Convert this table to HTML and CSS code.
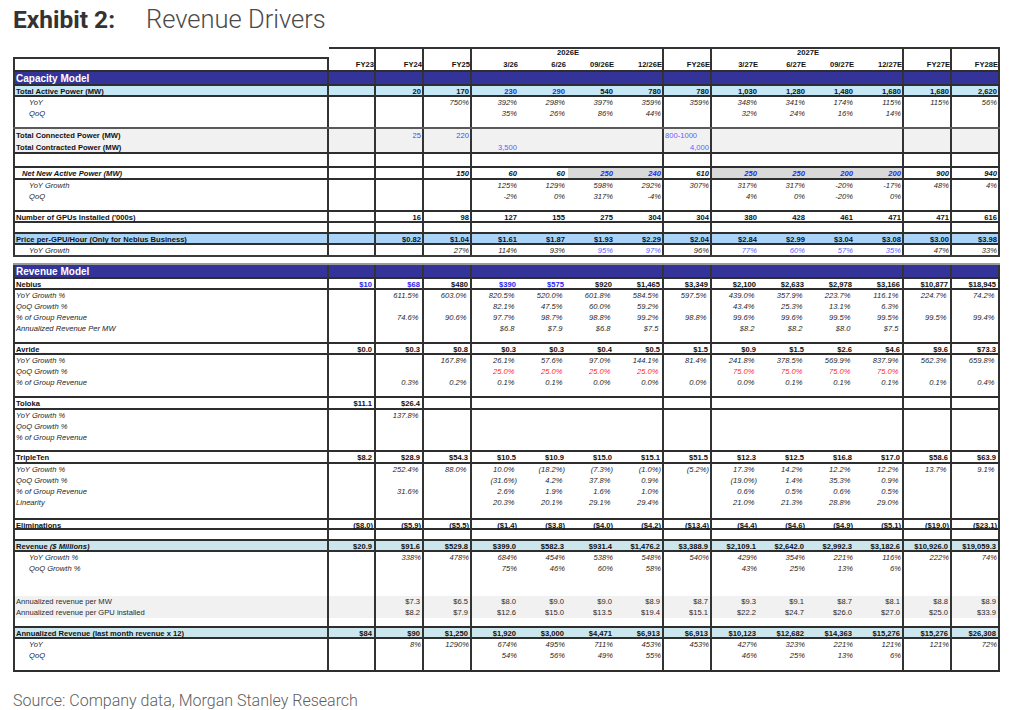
FILE: index.html
```html
<!DOCTYPE html>
<html lang="en">
<head>
<meta charset="utf-8">
<title>Exhibit 2: Revenue Drivers</title>
<link rel="stylesheet" href="styles.css">
</head>
<body>
<div class="page">
  <h1 class="title"><span class="ex">Exhibit 2:</span><span class="nm">Revenue Drivers</span></h1>

  <div class="t">
    <div class="yr"><span class="nb"></span><span></span><span></span><span></span><span class="y4">2026E</span><span></span><span class="y4">2027E</span><span></span><span></span></div>
    <div class="r hd h15 b"><span class="tl"></span><span>FY23</span><span>FY24</span><span>FY25</span><span>3/26</span><span>6/26</span><span>09/26E</span><span>12/26E</span><span>FY26E</span><span>3/27E</span><span>6/27E</span><span>09/27E</span><span>12/27E</span><span>FY27E</span><span>FY28E</span></div>

    <div class="r sec h14 b"><span>Capacity Model</span><span></span><span></span><span></span><span></span><span></span><span></span><span></span><span></span><span></span><span></span><span></span><span></span><span></span><span></span></div>
    <div class="r bd tap b"><span>Total Active Power (MW)</span><span></span><span>20</span><span>170</span><span class="bl">230</span><span class="bl">290</span><span>540</span><span>780</span><span>780</span><span>1,030</span><span>1,280</span><span>1,480</span><span>1,680</span><span>1,680</span><span>2,620</span></div>
    <div class="r it"><span class="in">YoY</span><span></span><span></span><span>750%</span><span>392%</span><span>298%</span><span>397%</span><span>359%</span><span>359%</span><span>348%</span><span>341%</span><span>174%</span><span>115%</span><span>115%</span><span>56%</span></div>
    <div class="r it"><span class="in">QoQ</span><span></span><span></span><span></span><span>35%</span><span>26%</span><span>86%</span><span>44%</span><span></span><span>32%</span><span>24%</span><span>16%</span><span>14%</span><span></span><span></span></div>
    <div class="r h10 bm"><span></span><span></span><span></span><span></span><span></span><span></span><span></span><span></span><span></span><span></span><span></span><span></span><span></span><span></span><span></span></div>
    <div class="r bd gy h13"><span>Total Connected Power (MW)</span><span></span><span class="nw bl2">25</span><span class="nw bl2">220</span><span></span><span></span><span></span><span></span><span class="nw lb la">800-1000</span><span></span><span></span><span></span><span></span><span></span><span></span></div>
    <div class="r bd gy h12 b"><span>Total Contracted Power (MW)</span><span></span><span></span><span></span><span class="nw lb">3,500</span><span></span><span></span><span></span><span class="nw lb">4,000</span><span></span><span></span><span></span><span></span><span></span><span></span></div>
    <div class="r h14 b"><span></span><span></span><span></span><span></span><span></span><span></span><span></span><span></span><span></span><span></span><span></span><span></span><span></span><span></span><span></span></div>
    <div class="r bd it h12 b"><span class="in2">Net New Active Power (MW)</span><span></span><span></span><span>150</span><span>60</span><span>60</span><span class="g bl">250</span><span class="g bl">240</span><span>610</span><span class="g bl">250</span><span class="g bl">250</span><span class="g bl">200</span><span class="g bl">200</span><span>900</span><span>940</span></div>
    <div class="r it"><span class="in">YoY Growth</span><span></span><span></span><span></span><span>125%</span><span>129%</span><span>598%</span><span>292%</span><span>307%</span><span>317%</span><span>317%</span><span>-20%</span><span>-17%</span><span>48%</span><span>4%</span></div>
    <div class="r it"><span class="in">QoQ</span><span></span><span></span><span></span><span>-2%</span><span>0%</span><span>317%</span><span>-4%</span><span></span><span>4%</span><span>0%</span><span>-20%</span><span>0%</span><span></span><span></span></div>
    <div class="r h10 b"><span></span><span></span><span></span><span></span><span></span><span></span><span></span><span></span><span></span><span></span><span></span><span></span><span></span><span></span><span></span></div>
    <div class="r bd b"><span>Number of GPUs Installed ('000s)</span><span></span><span>16</span><span>98</span><span>127</span><span>155</span><span>275</span><span>304</span><span>304</span><span>380</span><span>428</span><span>461</span><span>471</span><span>471</span><span>616</span></div>
    <div class="r b"><span></span><span></span><span></span><span></span><span></span><span></span><span></span><span></span><span></span><span></span><span></span><span></span><span></span><span></span><span></span></div>
    <div class="r bd pr b"><span>Price per-GPU/Hour (Only for Nebius Business)</span><span></span><span>$0.82</span><span>$1.04</span><span>$1.61</span><span>$1.87</span><span>$1.93</span><span>$2.29</span><span>$2.04</span><span>$2.84</span><span>$2.99</span><span>$3.04</span><span>$3.08</span><span>$3.00</span><span>$3.98</span></div>
    <div class="r it h12 b"><span class="in">YoY Growth</span><span></span><span></span><span>27%</span><span>114%</span><span>93%</span><span class="lb">95%</span><span class="lb">97%</span><span>96%</span><span class="lb">77%</span><span class="lb">60%</span><span class="lb">57%</span><span class="lb">35%</span><span>47%</span><span>33%</span></div>

    <div class="gap"></div>

    <div class="r sec h14 b"><span>Revenue Model</span><span></span><span></span><span></span><span></span><span></span><span></span><span></span><span></span><span></span><span></span><span></span><span></span><span></span><span></span></div>
    <div class="r bd rv b"><span>Nebius</span><span class="bl">$10</span><span class="bl">$68</span><span>$480</span><span class="bl">$390</span><span class="bl">$575</span><span>$920</span><span>$1,465</span><span>$3,349</span><span>$2,100</span><span>$2,633</span><span>$2,978</span><span>$3,166</span><span>$10,877</span><span>$18,945</span></div>
    <div class="r it sg"><span>YoY Growth %</span><span></span><span>611.5%</span><span>603.0%</span><span>820.5%</span><span>520.0%</span><span>601.8%</span><span>584.5%</span><span>597.5%</span><span>439.0%</span><span>357.9%</span><span>223.7%</span><span>116.1%</span><span>224.7%</span><span>74.2%</span></div>
    <div class="r it sg"><span>QoQ Growth %</span><span></span><span></span><span></span><span>82.1%</span><span>47.5%</span><span>60.0%</span><span>59.2%</span><span></span><span>43.4%</span><span>25.3%</span><span>13.1%</span><span>6.3%</span><span></span><span></span></div>
    <div class="r it sg"><span>% of Group Revenue</span><span></span><span>74.6%</span><span>90.6%</span><span>97.7%</span><span>98.7%</span><span>98.8%</span><span>99.2%</span><span>98.8%</span><span>99.6%</span><span>99.6%</span><span>99.5%</span><span>99.5%</span><span>99.5%</span><span>99.4%</span></div>
    <div class="r it sg"><span>Annualized Revenue Per MW</span><span></span><span></span><span></span><span>$6.8</span><span>$7.9</span><span>$6.8</span><span>$7.5</span><span></span><span>$8.2</span><span>$8.2</span><span>$8.0</span><span>$7.5</span><span></span><span></span></div>
    <div class="r h10 b"><span></span><span></span><span></span><span></span><span></span><span></span><span></span><span></span><span></span><span></span><span></span><span></span><span></span><span></span><span></span></div>

    <div class="r bd rv b"><span>Avride</span><span>$0.0</span><span>$0.3</span><span>$0.8</span><span>$0.3</span><span>$0.3</span><span>$0.4</span><span>$0.5</span><span>$1.5</span><span>$0.9</span><span>$1.5</span><span>$2.6</span><span>$4.6</span><span>$9.6</span><span>$73.3</span></div>
    <div class="r it sg"><span>YoY Growth %</span><span></span><span></span><span>167.8%</span><span>26.1%</span><span>57.6%</span><span>97.0%</span><span>144.1%</span><span>81.4%</span><span>241.8%</span><span>378.5%</span><span>569.9%</span><span>837.9%</span><span>562.3%</span><span>659.8%</span></div>
    <div class="r it sg"><span>QoQ Growth %</span><span></span><span></span><span></span><span class="rd">25.0%</span><span class="rd">25.0%</span><span class="rd">25.0%</span><span class="rd">25.0%</span><span></span><span class="rd">75.0%</span><span class="rd">75.0%</span><span class="rd">75.0%</span><span class="rd">75.0%</span><span></span><span></span></div>
    <div class="r it sg"><span>% of Group Revenue</span><span></span><span>0.3%</span><span>0.2%</span><span>0.1%</span><span>0.1%</span><span>0.0%</span><span>0.0%</span><span>0.0%</span><span>0.0%</span><span>0.1%</span><span>0.1%</span><span>0.1%</span><span>0.1%</span><span>0.4%</span></div>
    <div class="r h10 b"><span></span><span></span><span></span><span></span><span></span><span></span><span></span><span></span><span></span><span></span><span></span><span></span><span></span><span></span><span></span></div>

    <div class="r bd rv h12 b"><span>Toloka</span><span>$11.1</span><span>$26.4</span><span></span><span></span><span></span><span></span><span></span><span></span><span></span><span></span><span></span><span></span><span></span><span></span></div>
    <div class="r it sg"><span>YoY Growth %</span><span></span><span>137.8%</span><span></span><span></span><span></span><span></span><span></span><span></span><span></span><span></span><span></span><span></span><span></span><span></span></div>
    <div class="r it sg"><span>QoQ Growth %</span><span></span><span></span><span></span><span></span><span></span><span></span><span></span><span></span><span></span><span></span><span></span><span></span><span></span><span></span></div>
    <div class="r it sg"><span>% of Group Revenue</span><span></span><span></span><span></span><span></span><span></span><span></span><span></span><span></span><span></span><span></span><span></span><span></span><span></span><span></span></div>
    <div class="r h9 b"><span></span><span></span><span></span><span></span><span></span><span></span><span></span><span></span><span></span><span></span><span></span><span></span><span></span><span></span><span></span></div>

    <div class="r bd rv h12 b"><span>TripleTen</span><span>$8.2</span><span>$28.9</span><span>$54.3</span><span>$10.5</span><span>$10.9</span><span>$15.0</span><span>$15.1</span><span>$51.5</span><span>$12.3</span><span>$12.5</span><span>$16.8</span><span>$17.0</span><span>$58.6</span><span>$63.9</span></div>
    <div class="r it sg"><span>YoY Growth %</span><span></span><span>252.4%</span><span>88.0%</span><span>10.0%</span><span class="n">(18.2%)</span><span class="n">(7.3%)</span><span class="n">(1.0%)</span><span class="n">(5.2%)</span><span>17.3%</span><span>14.2%</span><span>12.2%</span><span>12.2%</span><span>13.7%</span><span>9.1%</span></div>
    <div class="r it sg"><span>QoQ Growth %</span><span></span><span></span><span></span><span class="n">(31.6%)</span><span>4.2%</span><span>37.8%</span><span>0.9%</span><span></span><span class="n">(19.0%)</span><span>1.4%</span><span>35.3%</span><span>0.9%</span><span></span><span></span></div>
    <div class="r it sg"><span>% of Group Revenue</span><span></span><span>31.6%</span><span></span><span>2.6%</span><span>1.9%</span><span>1.6%</span><span>1.0%</span><span></span><span>0.6%</span><span>0.5%</span><span>0.6%</span><span>0.5%</span><span></span><span></span></div>
    <div class="r it sg"><span>Linearity</span><span></span><span></span><span></span><span>20.3%</span><span>20.1%</span><span>29.1%</span><span>29.4%</span><span></span><span>21.0%</span><span>21.3%</span><span>28.8%</span><span>29.0%</span><span></span><span></span></div>
    <div class="r h12 b"><span></span><span></span><span></span><span></span><span></span><span></span><span></span><span></span><span></span><span></span><span></span><span></span><span></span><span></span><span></span></div>

    <div class="r bd rv h10 b"><span>Eliminations</span><span class="n">($8.0)</span><span class="n">($5.9)</span><span class="n">($5.5)</span><span class="n">($1.4)</span><span class="n">($3.8)</span><span class="n">($4.0)</span><span class="n">($4.2)</span><span class="n">($13.4)</span><span class="n">($4.4)</span><span class="n">($4.6)</span><span class="n">($4.9)</span><span class="n">($5.1)</span><span class="n">($19.0)</span><span class="n">($23.1)</span></div>
    <div class="r b"><span></span><span></span><span></span><span></span><span></span><span></span><span></span><span></span><span></span><span></span><span></span><span></span><span></span><span></span><span></span></div>

    <div class="r bd rv tot b"><span>Revenue&nbsp;<em>($ Millions)</em></span><span>$20.9</span><span>$91.6</span><span>$529.8</span><span>$399.0</span><span>$582.3</span><span>$931.4</span><span>$1,476.2</span><span>$3,388.9</span><span>$2,109.1</span><span>$2,642.0</span><span>$2,992.3</span><span>$3,182.6</span><span>$10,926.0</span><span>$19,059.3</span></div>
    <div class="r it"><span class="in">YoY Growth %</span><span></span><span>338%</span><span>478%</span><span>684%</span><span>454%</span><span>538%</span><span>548%</span><span>540%</span><span>429%</span><span>354%</span><span>221%</span><span>116%</span><span>222%</span><span>74%</span></div>
    <div class="r it"><span class="in">QoQ Growth %</span><span></span><span></span><span></span><span>75%</span><span>46%</span><span>60%</span><span>58%</span><span></span><span>43%</span><span>25%</span><span>13%</span><span>6%</span><span></span><span></span></div>
    <div class="r h22"><span></span><span></span><span></span><span></span><span></span><span></span><span></span><span></span><span></span><span></span><span></span><span></span><span></span><span></span><span></span></div>
    <div class="r rv gy pl"><span>Annualized revenue per MW</span><span></span><span>$7.3</span><span>$6.5</span><span>$8.0</span><span>$9.0</span><span>$9.0</span><span>$8.9</span><span>$8.7</span><span>$9.3</span><span>$9.1</span><span>$8.7</span><span>$8.1</span><span>$8.8</span><span>$8.9</span></div>
    <div class="r rv gy pl"><span>Annualized revenue per GPU installed</span><span></span><span>$8.2</span><span>$7.9</span><span>$12.6</span><span>$15.0</span><span>$13.5</span><span>$19.4</span><span>$15.1</span><span>$22.2</span><span>$24.7</span><span>$26.0</span><span>$27.0</span><span>$25.0</span><span>$33.9</span></div>
    <div class="r h10 b"><span></span><span></span><span></span><span></span><span></span><span></span><span></span><span></span><span></span><span></span><span></span><span></span><span></span><span></span><span></span></div>

    <div class="r bd rv tot b"><span>Annualized Revenue (last month revenue x 12)</span><span>$84</span><span>$90</span><span>$1,250</span><span>$1,920</span><span>$3,000</span><span>$4,471</span><span>$6,913</span><span>$6,913</span><span>$10,123</span><span>$12,682</span><span>$14,363</span><span>$15,276</span><span>$15,276</span><span>$26,308</span></div>
    <div class="r it"><span class="in">YoY</span><span></span><span>8%</span><span>1290%</span><span>674%</span><span>495%</span><span>711%</span><span>453%</span><span>453%</span><span>427%</span><span>323%</span><span>221%</span><span>121%</span><span>121%</span><span>72%</span></div>
    <div class="r it"><span class="in">QoQ</span><span></span><span></span><span></span><span>54%</span><span>56%</span><span>49%</span><span>55%</span><span></span><span>46%</span><span>25%</span><span>13%</span><span>6%</span><span></span><span></span></div>
    <div class="r b"><span></span><span></span><span></span><span></span><span></span><span></span><span></span><span></span><span></span><span></span><span></span><span></span><span></span><span></span><span></span></div>
  </div>

  <p class="src">Source: Company data, Morgan Stanley Research</p>
</div>
</body>
</html>
```

FILE: styles.css
```css
* { box-sizing: border-box; }

body {
  margin: 0;
  background: #ffffff;
}

.page {
  padding: 0 13px;
}

.title {
  margin: 0;
  padding-top: 5px;
  height: 33px;
  display: flex;
  align-items: baseline;
  font-family: Roboto, "Liberation Sans", sans-serif;
  font-size: 24.5px;
  line-height: 28px;
}

.ex {
  font-weight: 700;
  color: #333333;
  width: 133px;
}

.nm {
  font-size: 25.5px;
  font-weight: 300;
  color: #4a4a4a;
}

.t {
  width: 987px;
  margin-top: 14px;
  font-family: "Liberation Sans", Arial, sans-serif;
  font-size: 7.6px;
  color: #111111;
}

.r,
.yr {
  display: grid;
  grid-template-columns: 316px 47px repeat(13, 48px);
  height: 11px;
}

.r > span,
.yr > span {
  display: flex;
  align-items: center;
  justify-content: flex-end;
  padding-right: 3px;
  white-space: nowrap;
  line-height: 1;
  min-width: 0;
}

.r > span:nth-child(1) {
  justify-content: flex-start;
  padding-left: 3px;
  box-shadow: inset 2px 0 #333333, inset -2px 0 #333333;
}

.r > span:nth-child(2),
.r > span:nth-child(3),
.r > span:nth-child(4),
.r > span:nth-child(8),
.r > span:nth-child(9),
.r > span:nth-child(13),
.r > span:nth-child(14),
.r > span:nth-child(15) {
  box-shadow: inset -2px 0 #333333;
}

/* year group row */
.yr {
  height: 10px;
  font-weight: 700;
}

.yr > span {
  justify-content: center;
  padding-right: 0;
  border-top: 2px solid #333333;
  box-shadow: inset -2px 0 #333333;
}

.yr > .nb {
  border-top: none;
  box-shadow: none;
}

.yr > .y4 {
  grid-column: span 4;
}

/* header row */
.hd {
  font-weight: 700;
}

.hd > span {
  padding-right: 2px;
}

.hd > .tl {
  border-top: 2px solid #333333;
}

/* row heights */
.h9 { height: 9px; }
.h10 { height: 10px; }
.h12 { height: 12px; }
.h13 { height: 13px; }
.h14 { height: 14px; }
.h15 { height: 15px; }
.h22 { height: 22px; }

/* row bottom lines */
.b { border-bottom: 2px solid #2e2e2e; }
.bm { border-bottom: 2px solid #5a5a5a; }

.b > span,
.bm > span {
  padding-top: 2px;
}

.gap {
  height: 10px;
  border-top: 2px solid #3a3a3a;
  border-bottom: 2px solid #9a9a9a;
  margin-top: -2px;
}

/* section headers */
.sec {
  background: #333399;
  color: #ffffff;
  font-weight: 700;
  font-size: 10px;
}

.sec > span:nth-child(1) {
  padding-left: 3px;
}

/* text styles */
.bd { font-weight: 700; }

.it {
  font-style: italic;
  color: #262626;
}

.bd.it { color: #111111; }

.tot em {
  font-style: italic;
}

.in { padding-left: 16px !important; }
.in2 { padding-left: 9px !important; }

/* backgrounds */
.tap { background: #c6e7f6; }
.pr { background: #a9d4f8; }
.tot { background: #cce6ee; }
.gy { background: #f1f1f1; }
.g { background: #d9d9d9; }

/* colours */
.bl { color: #2727f5; }
.bl2 { color: #4646ff; }
.lb { color: #6060ff; }
.rd { color: #ff1f1f; }
.nw { font-weight: 400; }
.la { justify-content: flex-start !important; padding-left: 1px; }

/* revenue model right padding */
.rv > span { padding-right: 4px; }
.sg > span { padding-right: 5.5px; }
.r > span.n { padding-right: 3px; }

.pl {
  color: #2a2a2a;
}

.src {
  margin: 19px 0 0;
  font-family: Roboto, "Liberation Sans", sans-serif;
  font-size: 16px;
  font-weight: 300;
  line-height: 20px;
  color: #5e5e5e;
}
```
